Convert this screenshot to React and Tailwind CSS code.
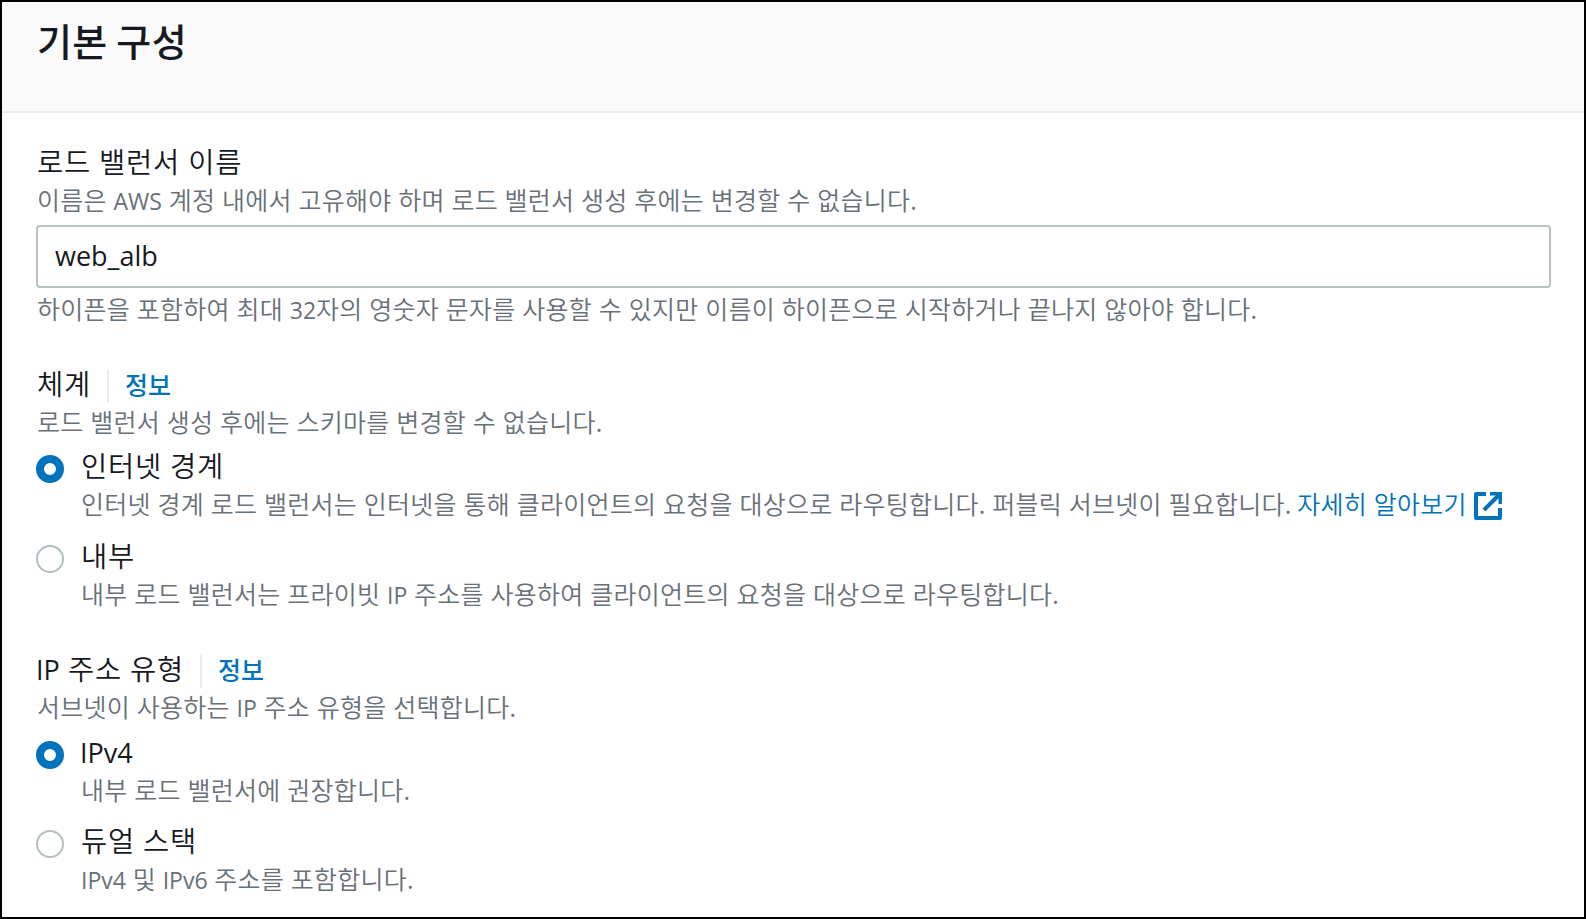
import { useState } from 'react';
import { clsx } from 'clsx';

export default function App() {
    const [name, setName] = useState('web_alb');
    const [scheme, setScheme] = useState('internet');
    const [ipType, setIpType] = useState('ipv4');

    return (
        <div className="flex h-[919px] w-[1586px] flex-col overflow-hidden border-2 border-black bg-white font-['Open_Sans','Noto_Sans_CJK_KR_DemiLight','Noto_Sans_CJK_KR',sans-serif] text-[#16191f]">
            <header className="h-[111px] shrink-0 border-b-2 border-[#eaeded] bg-[#fafafa] px-[35px] pt-3">
                <h2 className="font-['Noto_Sans_CJK_KR',sans-serif] text-[38px] leading-[52px] font-medium tracking-[0.3px] whitespace-nowrap">
                    기본 구성
                </h2>
            </header>

            <main className="flex flex-col px-[34px] pt-[29px]">
                {/* Load balancer name */}
                <section>
                    <Label>로드 밸런서 이름</Label>
                    <Description>
                        이름은 <Latin>AWS</Latin> 계정 내에서 고유해야 하며 로드 밸런서 생성 후에는 변경할 수 없습니다.
                    </Description>
                    <input
                        className="mt-[7px] block h-[63px] w-[1515px] rounded-[4px] border-2 border-[#b6c2c3] bg-white pr-4 pl-[17px] pb-0.5 text-[27px] outline-none"
                        value={name}
                        onChange={(e) => setName(e.target.value)}
                    />
                    <Description className="mt-[3px]">
                        하이픈을 포함하여 최대 <Latin>32</Latin>자의 영숫자 문자를 사용할 수 있지만 이름이 하이픈으로 시작하거나 끝나지 않아야 합니다.
                    </Description>
                </section>

                {/* Scheme */}
                <section className="mt-[37px]">
                    <LabelWithInfo>체계</LabelWithInfo>
                    <Description>로드 밸런서 생성 후에는 스키마를 변경할 수 없습니다.</Description>
                    <div className="mt-1.5 flex flex-col gap-3.5">
                        <RadioOption
                            label="인터넷 경계"
                            checked={scheme === 'internet'}
                            onSelect={() => setScheme('internet')}
                        >
                            인터넷 경계 로드 밸런서는 인터넷을 통해 클라이언트의 요청을 대상으로 라우팅합니다. 퍼블릭 서브넷이 필요합니다.{' '}
                            <a href="#" className="-ml-px text-[#0073bb]">
                                자세히 알아보기
                                <ExternalIcon />
                            </a>
                        </RadioOption>
                        <RadioOption
                            label="내부"
                            checked={scheme === 'internal'}
                            onSelect={() => setScheme('internal')}
                        >
                            내부 로드 밸런서는 프라이빗 <Latin>IP</Latin> 주소를 사용하여 클라이언트의 요청을 대상으로 라우팅합니다.
                        </RadioOption>
                    </div>
                </section>

                {/* IP address type */}
                <section className="mt-[37px]">
                    <LabelWithInfo>
                        <LatinLabel>IP</LatinLabel> 주소 유형
                    </LabelWithInfo>
                    <Description>
                        서브넷이 사용하는 <Latin>IP</Latin> 주소 유형을 선택합니다.
                    </Description>
                    <div className="mt-[7px] flex flex-col gap-[13px]">
                        <RadioOption
                            label={<LatinLabel>IPv4</LatinLabel>}
                            checked={ipType === 'ipv4'}
                            onSelect={() => setIpType('ipv4')}
                        >
                            내부 로드 밸런서에 권장합니다.
                        </RadioOption>
                        <RadioOption label="듀얼 스택" checked={ipType === 'dual'} onSelect={() => setIpType('dual')}>
                            <Latin>IPv4</Latin> 및 <Latin>IPv6</Latin> 주소를 포함합니다.
                        </RadioOption>
                    </div>
                </section>
            </main>
        </div>
    );
}

const Label = ({ children }) => (
    <div className="h-10 pl-px text-[28.5px] leading-10 tracking-[0.75px] whitespace-nowrap">{children}</div>
);

const LabelWithInfo = ({ children }) => (
    <div className="flex h-10">
        <Label>{children}</Label>
        <span className="mr-4 ml-4 mt-[5px] h-[34px] w-0.5 bg-[#eaeded]" />
        <a
            href="#"
            className="mt-px font-['Noto_Sans_CJK_KR',sans-serif] text-[25px] leading-[39px] font-medium text-[#0073bb]"
        >
            정보
        </a>
    </div>
);

const Description = ({ className, children }) => (
    <p
        className={clsx(
            'h-9 pl-px text-[25px] leading-9 tracking-[0.25px] whitespace-nowrap text-[#687078]',
            className
        )}
    >
        {children}
    </p>
);

// Latin runs sit a little smaller and heavier than the Hangul around them
const Latin = ({ children }) => <span className="text-[23px] font-medium tracking-normal">{children}</span>;

const LatinLabel = ({ children }) => <span className="-ml-px text-[27px] tracking-normal">{children}</span>;

const RadioOption = ({ label, checked, onSelect, children }) => (
    <div className="flex gap-4">
        <button
            type="button"
            role="radio"
            aria-checked={checked}
            onClick={onSelect}
            className={clsx(
                'mt-[9px] size-7 shrink-0 rounded-full bg-white',
                checked ? 'border-8 border-[#0073bb]' : 'border-2 border-[#b2bfc0]'
            )}
        />
        <div>
            <Label>{label}</Label>
            <Description>{children}</Description>
        </div>
    </div>
);

const ExternalIcon = () => (
    <svg
        className="ml-[7px] inline-block size-7 align-[-6px]"
        viewBox="0 0 28 28"
        fill="none"
        stroke="currentColor"
        strokeWidth="4"
        strokeLinejoin="round"
    >
        <path d="M12 2H2v24h24V16" />
        <path d="M25 3L10 18" />
        <path d="M16 0h12v12h-3.5V3.5H16z" fill="currentColor" stroke="none" />
    </svg>
);
